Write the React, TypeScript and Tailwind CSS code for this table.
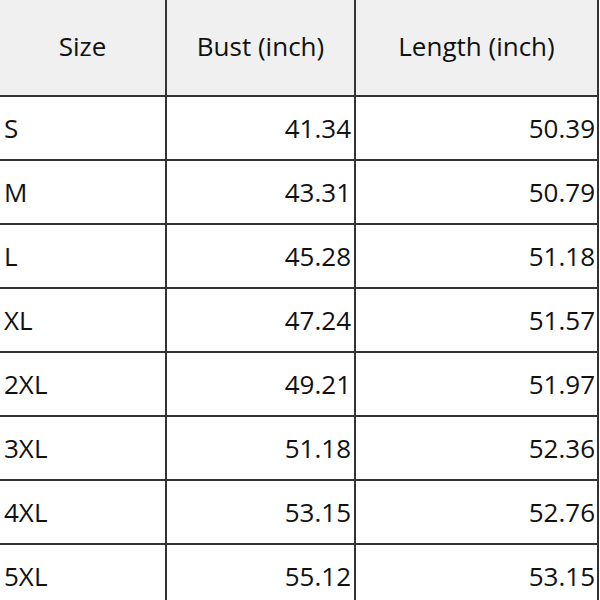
import React from "react";

const rows = [
  ["S", "41.34", "50.39"],
  ["M", "43.31", "50.79"],
  ["L", "45.28", "51.18"],
  ["XL", "47.24", "51.57"],
  ["2XL", "49.21", "51.97"],
  ["3XL", "51.18", "52.36"],
  ["4XL", "53.15", "52.76"],
  ["5XL", "55.12", "53.15"],
];

const App = () => {
  return (
    <div
      className="w-[600px] h-[600px] overflow-hidden bg-white text-[#111] text-[26px]"
      style={{ fontFamily: '"Open Sans", "Noto Sans", sans-serif' }}
    >
      <div className="grid grid-cols-[167px_189px_243px]">
        <div className="h-[97px] flex items-center justify-center pb-[3px] bg-[#f0f0f0] border-r-2 border-b-2 border-[#333]">
          Size
        </div>
        <div className="h-[97px] flex items-center justify-center pb-[3px] bg-[#f0f0f0] border-r-2 border-b-2 border-[#333]">
          Bust (inch)
        </div>
        <div className="h-[97px] flex items-center justify-center pb-[3px] bg-[#f0f0f0] border-r-2 border-b-2 border-[#333]">
          Length (inch)
        </div>

        {rows.map(([size, bust, length]) => (
          <React.Fragment key={size}>
            <div className="h-[64px] flex items-center pl-[4px] border-r-2 border-b-2 border-[#333]">
              {size}
            </div>
            <div className="h-[64px] flex items-center justify-end pr-[3px] border-r-2 border-b-2 border-[#333]">
              {bust}
            </div>
            <div className="h-[64px] flex items-center justify-end pr-[2px] border-r-2 border-b-2 border-[#333]">
              {length}
            </div>
          </React.Fragment>
        ))}
      </div>
    </div>
  );
};

export default App;
